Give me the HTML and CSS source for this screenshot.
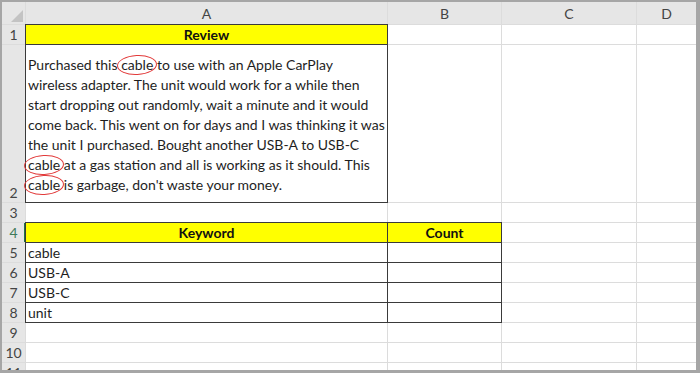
FILE: index.html
```html
<!DOCTYPE html>
<html>
<head>
<meta charset="utf-8">
<link rel="stylesheet" href="styles.css">
</head>
<body>
<div class="frame">
  <div class="sheet">
    <div class="corner"><svg width="23" height="22" viewBox="0 0 23 22"><polygon points="21,8 21,20 9,20" fill="#c3c3c3"/></svg></div>
    <div class="ch">A</div><div class="ch">B</div><div class="ch">C</div><div class="ch">D</div>

    <div class="rh">1</div>
    <div class="c bx y b">Review</div><div class="c"></div><div class="c"></div><div class="c"></div>

    <div class="rh rh-bottom">2</div>
    <div class="c bx wrap"><p class="review">Purchased this <span class="mark">cable</span> to use with an Apple CarPlay<br>wireless adapter. The unit would work for a while then<br>start dropping out randomly, wait a minute and it would<br>come back. This went on for days and I was thinking it was<br>the unit I purchased. Bought another USB-A to USB-C<br><span class="mark">cable</span> at a gas station and all is working as it should. This<br><span class="mark">cable</span> is garbage, don't waste your money.</p></div><div class="c"></div><div class="c"></div><div class="c"></div>

    <div class="rh">3</div>
    <div class="c"></div><div class="c"></div><div class="c"></div><div class="c"></div>

    <div class="rh sel">4</div>
    <div class="c bx y b">Keyword</div><div class="c bx y b">Count</div><div class="c"></div><div class="c"></div>

    <div class="rh">5</div>
    <div class="c bx">cable</div><div class="c bx"></div><div class="c"></div><div class="c"></div>

    <div class="rh">6</div>
    <div class="c bx">USB-A</div><div class="c bx"></div><div class="c"></div><div class="c"></div>

    <div class="rh">7</div>
    <div class="c bx">USB-C</div><div class="c bx"></div><div class="c"></div><div class="c"></div>

    <div class="rh">8</div>
    <div class="c bx">unit</div><div class="c bx"></div><div class="c"></div><div class="c"></div>

    <div class="rh">9</div>
    <div class="c"></div><div class="c"></div><div class="c"></div><div class="c"></div>

    <div class="rh">10</div>
    <div class="c"></div><div class="c"></div><div class="c"></div><div class="c"></div>

    <div class="rh">11</div>
    <div class="c"></div><div class="c"></div><div class="c"></div><div class="c"></div>
  </div>
</div>
</body>
</html>
```

FILE: styles.css
```css
html, body {
  margin: 0;
  padding: 0;
  background: #ffffff;
}

.frame {
  width: 700px;
  height: 373px;
  box-sizing: border-box;
  border-style: solid;
  border-color: #a6a6a6;
  border-width: 2px 4px 3px 2px;
  overflow: hidden;
}

.sheet {
  display: grid;
  grid-template-columns: 23px 361px 113px 134px 59px;
  grid-template-rows: 22px 19px 157px repeat(9, 19px);
  gap: 1px;
  background: #dcdcdc;
  font-family: Lato, "Open Sans", sans-serif;
  font-size: 14px;
  color: #1e1e1e;
}

.corner {
  background: #e6e6e6;
}
.corner svg {
  display: block;
}

.ch {
  background: #e6e6e6;
  color: #444444;
  font-size: 14px;
  display: flex;
  align-items: center;
  justify-content: center;
}

.rh {
  background: #e6e6e6;
  color: #444444;
  font-size: 14px;
  display: flex;
  align-items: center;
  justify-content: center;
}

.rh-bottom {
  align-items: flex-end;
  padding-bottom: 1px;
}

.rh.sel {
  color: #3f7a5a;
  box-shadow: inset -1px 0 0 #217346;
}

.c {
  background: #ffffff;
  display: flex;
  align-items: center;
  padding-left: 2px;
  white-space: nowrap;
  line-height: 19px;
}

.bx {
  outline: 1px solid #3a3a3a;
}

.y {
  background: #ffff00;
}

.b {
  font-weight: 700;
  justify-content: center;
  padding-left: 0;
  color: #111111;
}

.wrap {
  align-items: flex-end;
}

.review {
  margin: 0 0 7px 0;
  line-height: 20px;
}

.mark {
  position: relative;
}

.mark::after {
  content: "";
  position: absolute;
  left: -4px;
  right: -4px;
  top: -1px;
  bottom: -2px;
  border: 1px solid #e23a3a;
  border-radius: 50%;
  transform: rotate(-3deg);
}
```
